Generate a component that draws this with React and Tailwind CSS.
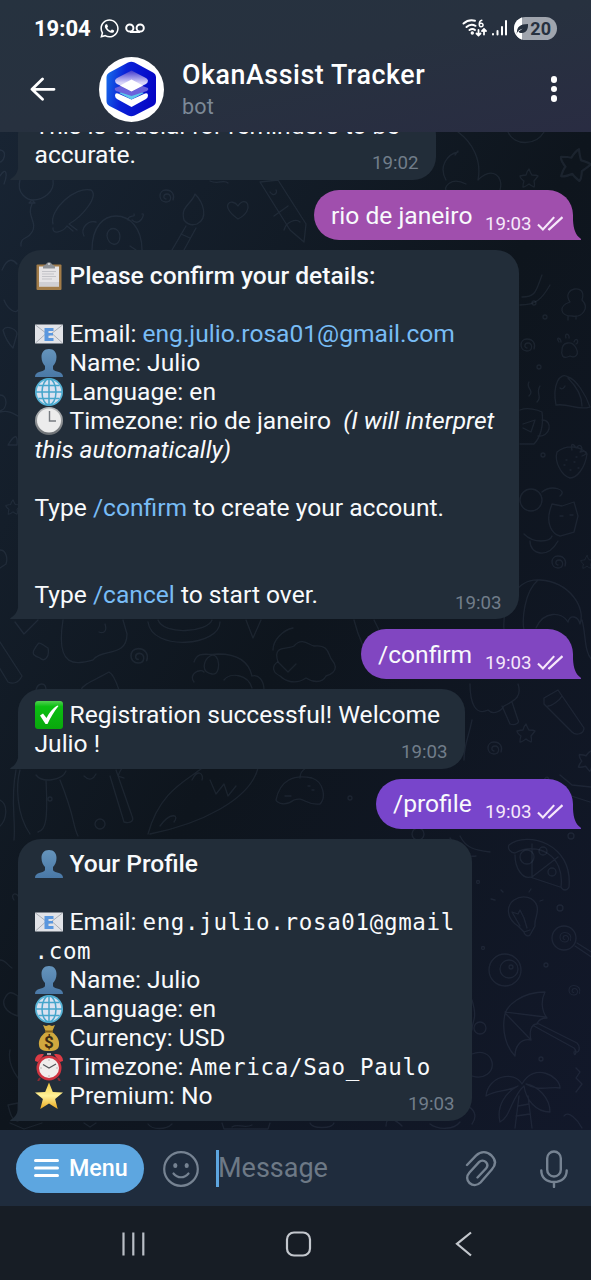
import React from "react";
import { FaWhatsapp } from "react-icons/fa";

function Spiral({ x, y, s = 1 }) {
  return (
    <path
      transform={`translate(${x} ${y}) scale(${s})`}
      d="M1 2c-3 0-3-5 1-5 5 0 5 8-1 8-8 0-8-12 0-12 6 0 9 5 7 10"
    />
  );
}

function Star({ x, y, s = 1, r = 0 }) {
  return (
    <path
      transform={`translate(${x} ${y}) rotate(${r}) scale(${s})`}
      d="M0-9Q2-4 3-3 8-3 9-2 6 2 5 3 6 8 5 9 1 7 0 6-4 9-6 9-6 5-5 3-9 0-9-2-5-3-3-3-2-7 0-9Z"
    />
  );
}

function Doodles() {
  return (
    <svg
      className="absolute left-0 top-0"
      width="591"
      height="998"
      viewBox="0 132 591 998"
      fill="none"
      stroke="#8fa3c0"
      strokeOpacity="0.1"
      strokeWidth="1.3"
      strokeLinecap="round"
      strokeLinejoin="round"
    >
      <Spiral x={165} y={197} />
      <Spiral x={526} y={346} />
      <Spiral x={557} y={563} />
      <Spiral x={137} y={657} s={1.2} />
      <Spiral x={493} y={749} />
      <Spiral x={573} y={991} s={0.8} />
      <Star x={529} y={178} />
      <Star x={526} y={733} />
      <Star x={575} y={164} s={1.7} r={15} />
      <Star x={13} y={507} s={0.8} />
      <Star x={587} y={562} s={0.7} />
      <Star x={588} y={760} s={1.1} r={20} />
      <path d="M20 180c-4 14 8 20 13 20 10 0 22-8 20-20M29 203l3-3 3 3zM32 204c-6 12 6 18 0 28-4 8-12 4-11 14M53 224c-4-14 22-38 38-34 8 6-8 26-22 34l8 6M73 231l-6-5c-4 6-15 9-14 2" />
      <path d="M92 250c0-24 12-34 24-34 14 0 26 12 26 34M84 236c-4-8 4-16 12-14M132 220c8 8 14-8 10-6M107 236c0-10 12-10 13 0 0 12-12 10-13 0M128 220c0-6 8-2 6-6M106 250l6 4M130 246l6 4" />
      <path d="M184 220c-4-14 8-16 11-26 8 8 14 24 2 30-6 2-10 0-13-4zM186 226l-14 24M196 228l-12 22M181 234l9 4" />
      <path d="M238 219c-20-14-6-22 0-13 8-12 18 4 0 13z" />
      <path d="M260 182l30 48 14 12 2-18-28-44zM270 192c4 6 8 0 6-2M274 216l14-10M284 230c2-8 12-12 16-8" />
      <path d="M210 181c8 4 14-2 18 2M446 180c-8-14 2-26 12-28M458 132c14 10 24 28 20 48 14-14 26-4 22 10M508 132c6 14 28 14 36 0M455 155l3-4M466 184c-16-8-22 4-20 6" />
      <path d="M0 150c8 0 4 14-2 12M0 176c6-10 8-2 4 8M2 270c6-14 12-10 15-6M4 300c4 10 12 14 14 10M3 330c4-6 14 0 14 4l-4 14c-4-4-8-10-10-18zM0 395c8 0 8 14 0 16M0 412c10-2 14 2 18 4M8 445c6-10 10-12 9 0zM0 550c6 0 8 8 6 14l-6 4" />
      <path d="M520 305c16 0 22-6 30-20M522 297c14 0 14-6 20-22M570 302c-10-14 18-20 12-2 8 8 0 18-10 16-12 0-14-10-2-14M568 316v4M576 316v3" />
      <circle cx="534" cy="303" r="2" />
      <circle cx="545" cy="317" r="2" />
      <circle cx="539" cy="367" r="2" />
      <circle cx="543" cy="455" r="2" />
      <path d="M562 350c0-8 10-10 14-2 4 8-2 10-6 8-8 4-9-2-8-6M559 342c-4-6 2-4 2 0M566 338c-2-6 4-4 3 0M574 342c2-6 6 0 2 2" />
      <path d="M556 405c-4-20 4-34 12-28 8 2 18 18 22 30-14 4-20-4-34-2zM568 378c8 8 14 18 14 28M560 388c2 2 4 0 5-2M529 396c6-6-4-8 0-14M537 402c6-6-2-8 3-16M520 410c8-3 18 0 22 2 2 14-2 26-8 32h-14M542 420c12 0 8 18-4 16M523 424l12-4-4 12-8-4" />
      <path d="M557 452c10-8 24-6 30 2-2 14-10 24-17 24-8-2-16-16-13-26zM572 450c-2-8 2-6 4-2 4-6 8 0 4 4 8-2 8 2 2 4M566 460h1M574 462h1M578 468h1M570 470h1M564 465h1M576 457h1" />
      <circle cx="531" cy="500" r="11" />
      <path d="M542 492c10-8 26-2 18 4M550 510l2-6 10 2 12-4 4 14-4 16-14 4c-8-2-14-12-10-26zM560 516h3M570 515h3M524 534c10 10 26 8 28 2M530 541c0 14 18 18 28 0" />
      <path d="M504 630c-2-24 12-52 36-50 30 2 46 28 40 44-2-8-10-10-12-2-6-10-24-12-32 6M538 580c-14 12-16 40-14 50M582 620c4 14 2 32 10 40" />
      <path d="M63 620c-8 50 14 44 30 40 8-12 34-2 34-26l-4-14M99 632c6 2 8-2 6-8M148 622c4 30 72 24 72 0M158 620c6 16 50 12 54 0M246 620l7 18 8-18M15 622l9 12 14-14M34 650c6-10 4-8 14-2 2 10-4 14-8 10-6-2-8-4-6-8z" />
      <path d="M0 642l22 34c-4 8-10 8-14 6l-12-20M194 662c4-12 14-6 24-8 14 0 30 4 34 22 6-2 12 4 12 14M210 656c10-6 12 20 2 18-12-2-8-14-2-18M194 682c-6-8 6-14 10-10M224 680c6-8 24-6 28 8M81 690c2-6 14-10 28-18 4 2 8 12 10 18M36 690c2-8 10-8 10 0M273 650c0-10 10-20 20-22M278 662l10 10 8-8" />
      <path d="M280 676c-12-6-4-14-2-14-6-18 10-12 16-16 8-10 16 0 20 0 16-2 14 10 18 14 10 12-6 16-6 16-4 8-14 6-20 2-12 8-22 2-26-2z" />
      <path d="M354 620c4 16 12 34 22 50M374 620l6 12M470 684c0 20 6 32 18 26 6 6 14 0 16-4 12-6 18-10 14-22M502 706l8 18c6 2 10-2 8-4l-6-18M544 698l14-8 26 38c0 6-8 8-12 4l-28-28zM548 706c4 0 12-6 14-10M472 720c-4 20-8 24-8 40M543 782c4-10 8-2 5 2-4 2-6 0-5-2M560 775l12 10 19 2M526 800l14-14 50 16" />
      <path d="M14 840c2-20-4-40 2-70M30 834c-14-20-14-50-10-64M36 775c6 8 26 6 30-4M46 780c2 40 0 50-8 52M60 780c16 40 12 44 18 56M84 776c6 6 10 2 12-2M110 776l14 46c8 2 10-2 8-6l-16-46M122 768c-6 10-4 8 2 10" />
      <path d="M148 834c12-44 40-54 54-66M150 834c50-10 100-34 108-66M192 780c6-12 12-6 10 0M210 780l6 14 8-10 4 12 8-10M160 826c10-14 20-12 14-4M276 800c4-20 18-26 36-22 12 4 14 20 8 26-14 2-16-8-26-4-8 6-16 4-18 0zM285 796h6M308 786h2M312 790h2M300 778c0-8 8-14 18-10" />
      <circle cx="50" cy="799" r="2" />
      <circle cx="350" cy="798" r="2" />
      <circle cx="100" cy="824" r="5" />
      <circle cx="418" cy="834" r="6" />
      <path d="M0 800c8 4 8 20-2 28M14 900c-4-6 2-8 4-4M0 960c6 0 8 6 12 8M4 1000c4-10 8-8 14-4v20c-8-2-16-8-14-16zM10 1050c-2 10 2 20 8 28M8 1105l10-2v18c-6 0-8-8-10-16zM450 838c8 10 14 20 26 18M460 836c6 12 14 14 30 16" />
      <path d="M509 845c18-14 64-2 60 42-2 4-6 4-8 0 4-32-24-46-46-34-4 0-8-4-6-8zM515 855c0 14 8 24 15 22l30 10M532 844v33l26-20" />
      <circle cx="527" cy="857" r="7" />
      <circle cx="543" cy="851" r="4" />
      <circle cx="552" cy="872" r="4" />
      <circle cx="571" cy="836" r="3" />
      <path d="M518 926c-12-8-12-20-4-26 9-6 20-3 23 6 2 9-3 12-2 20l-5 9c-2 2-6 0-6-3zM524 932l6-2M520 926l-8-14 6 2 2-4 4 8 3 10M491 899l4 1M501 890l2 2M531 889l-2 3M543 900l-3 1" />
      <circle cx="564" cy="938" r="12" />
      <Spiral x={564} y={938} s={0.8} />
      <path d="M575 946l18 12M577 943l16 10" />
      <circle cx="505" cy="970" r="16" />
      <circle cx="509" cy="969" r="9" />
      <circle cx="511" cy="967" r="2" />
      <circle cx="560" cy="908" r="3" />
      <circle cx="546" cy="965" r="2" />
      <circle cx="478" cy="882" r="1.5" />
      <circle cx="483" cy="948" r="1.5" />
      <circle cx="480" cy="1028" r="6" />
      <circle cx="541" cy="1059" r="2" />
      <path d="M545 992c-24 0-38 14-40 22-4 18 2 34 10 42 0-10 6-18 16-16-2-8 0-16 6-16 2-6 8-6 10-6-6-8-6-18-2-26zM505 1012l40 5M506 1014l25 26M534 1026l40 22c4 4 0 10 0 4M537 1023l40 20c4 4 2 12-2 8M472 1000c6 20 0 20 0 30M472 1076c12 4 22-4 20-14-2-8-10-12-20-8" />
      <path d="M522 1084c-8-14-34-8-36 12 10-6 20-4 32-10-12 6-22 20-18 36 10-4 12-26 24-36 2 14 12 26 26 26 0-14-12-26-24-28 12 8 26 2 34 4 0-12-26-26-38-4M519 1096l-4 32M528 1096l4 32M518 1106l11-2M516 1116l14-2M576 1068l4 4-4 6 6 6-6 8M564 1116c4-6 14 4 18 12M466 1106c8 2 12 10 6 18M386 1126c0-12 10-6 16 0M430 1124c8 6 24 6 30-2" />
      <path d="M10 1123l14 6 18-6M84 1123l6 4 6-4M148 1124c4 6 18 6 24 0M222 1123l2 6h44l2-6M232 1127c6-4 12 2 20-2M310 1123c2 6 22 6 24 0" />
    </svg>
  );
}

/* ---------- emoji drawings ---------- */

function Emoji({ children }) {
  return (
    <svg className="mr-[7px] inline-block h-7 w-7 align-[-6px]" viewBox="0 0 28 28">
      {children}
    </svg>
  );
}

function Clipboard() {
  return (
    <Emoji>
      <rect x="1.5" y="2.5" width="25" height="25.5" rx="1" fill="#a27c49" />
      <path d="M4 4.5h20v20H4z" fill="#e6e4e6" />
      <path d="M4 20h20v4.500H4z" fill="#d0cfd3" />
      <path d="M7 9.500h14M7 12h12M7 14.500h14M7 17h10" stroke="#c3c3c8" strokeWidth="1" />
      <path d="M8 6.500V4l3-1.500c1-3 5-3 6 0L20 4v2.500z" fill="#8d9196" />
      <circle cx="14" cy="2" r="1" fill="#d9dcdf" />
    </Emoji>
  );
}

function EmailIcon() {
  return (
    <Emoji>
      <rect x="0" y="4.500" width="28" height="19" rx="0.8" fill="#e1e3e8" />
      <path d="M.5 23l10-9M27.500 23l-10-9M.5 5L14 15.500 27.500 5" stroke="#a9adb5" strokeWidth="1" fill="none" />
      <path d="M9.500 8h9v3h-5v2h4.500v2.500h-4.500v2.500h5v3h-9z" fill="#5a97de" />
    </Emoji>
  );
}

function Person() {
  return (
    <Emoji>
      <defs>
        <linearGradient id="bust" x1="0" y1="0" x2="0" y2="1">
          <stop offset="0" stopColor="#6594bc" />
          <stop offset="1" stopColor="#4a78a6" />
        </linearGradient>
      </defs>
      <path
        d="M14 0c5 0 7.500 3.500 7.500 8 0 4-1.500 7-3.500 9v2.500c0 2 2.500 2.500 5 3.300 3.500 1.100 5 2.200 5 5.200H0c0-3 1.500-4.100 5-5.200 2.500-.8 5-1.300 5-3.300V17c-2-2-3.500-5-3.500-9C6.500 3.500 9 0 14 0z"
        fill="url(#bust)"
      />
    </Emoji>
  );
}

function Globe() {
  return (
    <Emoji>
      <circle cx="14" cy="14" r="14" fill="#55b3d6" />
      <circle cx="14" cy="14" r="12.300" fill="#d9e2f1" />
      <g fill="none" stroke="#45a5cb" strokeWidth="1.500">
        <path d="M14 1v26M1 14h26M3.500 7.500h21M3.500 20.500h21" />
        <ellipse cx="14" cy="14" rx="7" ry="13" />
      </g>
    </Emoji>
  );
}

function Clock() {
  return (
    <Emoji>
      <defs>
        <linearGradient id="rim" x1="0" y1="0" x2="0" y2="1">
          <stop offset="0" stopColor="#b9bbbd" />
          <stop offset="1" stopColor="#6b6f73" />
        </linearGradient>
      </defs>
      <circle cx="14" cy="14" r="14" fill="url(#rim)" />
      <circle cx="14" cy="13.600" r="12" fill="#ececec" />
      <path d="M14.500 4v10H21" stroke="#777b80" strokeWidth="1.400" fill="none" />
    </Emoji>
  );
}

function CheckBox() {
  return (
    <Emoji>
      <defs>
        <linearGradient id="green" x1="0" y1="0" x2="0" y2="1">
          <stop offset="0" stopColor="#52d052" />
          <stop offset=".2" stopColor="#0bbf12" />
          <stop offset="1" stopColor="#09a80c" />
        </linearGradient>
      </defs>
      <rect width="28" height="28" rx="3" fill="url(#green)" />
      <path d="M5 14.500l3-2 3.500 4.500C14 12 18 7 22.500 4.500l1 .5C19 10.500 15.500 16.500 12.500 23h-2z" fill="#fff" />
    </Emoji>
  );
}

function MoneyBag() {
  return (
    <Emoji>
      <path d="M8 1l3 1 3-1 3 1 3-1-3 7c6 4 7.500 9 7 13-.3 4-3 6-10 6s-9.700-2-10-6c-.5-4 1-9 7-13z" fill="#d0a83e" />
      <path d="M10 7.500h8" stroke="#86631c" strokeWidth="2" />
      <text x="14" y="24" textAnchor="middle" fontSize="17" fontWeight="700" fill="#3b2b14" fontFamily="Roboto, sans-serif">
        $
      </text>
    </Emoji>
  );
}

function Alarm() {
  return (
    <Emoji>
      <path d="M0 8C0 3 4 0 9 1.500L3 9zM28 8c0-5-4-8-9-6.500L25 9z" fill="#dd3b45" />
      <path d="M12 2h4v-2h-4z" fill="#a9a9ad" />
      <path d="M5 25l-2 3M23 25l2 3" stroke="#8c2b33" strokeWidth="2" />
      <circle cx="14" cy="15" r="12.500" fill="#cf3440" />
      <circle cx="14" cy="15" r="10" fill="#f0eeec" />
      <path d="M8 11.500l6 3.500 7-4" stroke="#55585c" strokeWidth="1.200" fill="none" />
      <path d="M14 6.500v1M14 22.500v1M5.500 15h1M21.500 15h1" stroke="#888" />
    </Emoji>
  );
}

function StarEmoji() {
  return (
    <Emoji>
      <defs>
        <linearGradient id="gold" x1="0" y1="0" x2="0" y2="1">
          <stop offset="0" stopColor="#f3c93a" />
          <stop offset=".5" stopColor="#fff29a" />
          <stop offset="1" stopColor="#e9a71c" />
        </linearGradient>
      </defs>
      <path d="M14 .5l3.800 9.500L28 10.600l-7.900 6.500 2.600 10-8.700-5.600-8.700 5.600 2.600-10L0 10.600 10.200 10z" fill="url(#gold)" />
    </Emoji>
  );
}

/* ---------- message parts ---------- */

function Time({ children }) {
  return <span className="relative top-[9px] text-[18.7px] text-[#717d8a]">{children}</span>;
}

function Incoming({ className, children }) {
  return (
    <div className={`relative ml-[17.5px] rounded-[23px] rounded-bl-none bg-[#222d39] pl-[17px] pr-[17px] ${className}`}>
      <svg className="absolute -left-[8px] bottom-0" width="9" height="18" viewBox="0 0 9 18">
        <path d="M9 0C8.500 9 6 14 .5 17c-.8.500-.5 1 .5 1H9z" fill="#222d39" />
      </svg>
      {children}
    </div>
  );
}

function Outgoing({ className, fill, children }) {
  return (
    <div className={`relative mr-[18px] flex h-[50px] justify-between self-end rounded-[25px] rounded-br-none pl-[17px] pr-[10px] pt-[10.500px] ${className}`}>
      <svg className={`absolute -right-[9px] bottom-0 ${fill}`} width="10" height="20" viewBox="0 0 10 20">
        <path d="M0 0h1c.5 9 2.500 15 7.500 18.500 1 .8.700 1.500-.5 1.500H0z" />
      </svg>
      <span className="text-[24.6px]">{children}</span>
      <span className="relative top-[9px] flex gap-[5px] text-[18.7px] text-[#f6e8fa]">
        19:03
        <svg className="mt-[6px]" width="26.500" height="15" viewBox="0 0 27 15" fill="none" stroke="#f6e8fa" strokeWidth="2.200">
          <path d="M1 8.500l5 5L17.500 1M11.500 12.800l1 .7L26 1" />
        </svg>
      </span>
    </div>
  );
}

function Line({ children }) {
  return <div className="h-[29px] whitespace-pre">{children}</div>;
}

function Link({ children }) {
  return <span className="text-[#78bcf5]">{children}</span>;
}

function Mono({ children }) {
  return <span className="font-['DejaVu_Sans_Mono',monospace] text-[22.500px] tracking-[0.660px]">{children}</span>;
}

function StatusBar() {
  return (
    <div className="flex h-14 items-center justify-between pl-[34px] pr-[34px]">
      <div className="flex items-center text-white">
        <span className="text-[22px] font-bold">19:04</span>
        <FaWhatsapp className="ml-[8px]" size={21} />
        <svg className="ml-[5px]" width="20" height="11" viewBox="0 0 20 11" fill="none" stroke="#fff" strokeWidth="2">
          <circle cx="4.800" cy="5" r="3.600" />
          <circle cx="15.200" cy="5" r="3.600" />
          <path d="M5 9h10" />
        </svg>
      </div>
      <div className="flex items-center">
        <svg width="46" height="22" viewBox="0 0 46 22" fill="none" stroke="#fff" strokeWidth="2" strokeLinecap="round">
          <path d="M1.500 6.500C5 3.500 9 2.800 13 3.800M4.500 10c2.500-2.300 6-2.800 9-1.200M7.500 13c2-1.300 4-1.200 5.500 0" />
          <circle cx="10.300" cy="16" r=".7" fill="#fff" />
          <path d="M19.800 3.300c-3 .5-3.500 6.500-.8 6.500 2.800 0 2.600-3.800 0-3.600-1.300.1-1.800 1-1.800 1.800" strokeWidth="1.500" />
          <path d="M16.500 13v5.500m-2-2l2 2 2-2M22 17.500V12m-2 2l2-2 2 2" strokeWidth="1.800" />
          <path d="M31 17v.5M35.500 14v3.500M40 10v7.500M44 4v13.500" strokeWidth="2" />
        </svg>
        <div className="relative ml-[6px] flex h-[23px] w-[43px] items-center justify-end overflow-hidden rounded-full bg-[#a0a5ae] pr-[6px]">
          <svg className="absolute left-0 top-0" width="16" height="23" viewBox="0 0 16 23">
            <path d="M0 0h8v23H0z" fill="#fff" />
            <path d="M3 15c0-5 3-8 11-8 .5 5-2 9-6 9-2 0-3-.5-3.500-1.500L9 11.500l-4 1.700L2 17z" fill="#27313f" />
          </svg>
          <span className="text-[18px] font-bold text-[#27313f]">20</span>
        </div>
      </div>
    </div>
  );
}

function Avatar() {
  return (
    <svg className="ml-[43px] shrink-0" width="65" height="65" viewBox="0 0 65 65">
      <defs>
        <linearGradient id="hex" x1="0" y1=".3" x2="1" y2=".5">
          <stop offset="0" stopColor="#1668e8" />
          <stop offset=".35" stopColor="#0a22d8" />
          <stop offset="1" stopColor="#0505c4" />
        </linearGradient>
        <linearGradient id="sheet" x1="0" y1="0" x2="0" y2="1">
          <stop offset="0" stopColor="#4038cc" />
          <stop offset=".6" stopColor="#d9d5fa" />
        </linearGradient>
      </defs>
      <circle cx="32.500" cy="32.500" r="32.500" fill="#fff" />
      <path d="M29 5.500q3.300-1.600 6.600 0L54 15.500q3 1.600 3 5v23.500q0 3.400-3 5l-18.400 9.500q-3.300 1.600-6.600 0L10.500 49q-3-1.600-3-5V20.500q0-3.400 3-5z" fill="url(#hex)" />
      <path d="M16 38.500q0-3 3-2l13.500 6 13.500-6q3-1 3 2 0 2-2 3.500L32.500 50 18 42q-2-1.500-2-3.500z" fill="#fff" />
      <path d="M20 36l12.500-6L45 36l-12.500 6.500z" fill="#5cc6ea" />
      <path d="M16 31l16.500-6L49 31q1 1.500-1 3L32.500 39 17 34q-2-1.500-1-3z" fill="#6a62dc" />
      <path d="M16 23.500q.5-2 3-3L32.500 13.500 46 20.500q2.500 1 3 3 0 2-2 3.500L32.500 34 18 27q-2-1.500-2-3.500z" fill="url(#sheet)" />
      <path d="M21 28.500l11.500-6 11.500 6-11.500 6z" fill="#fff" />
    </svg>
  );
}

function Header() {
  return (
    <header className="h-[132px] bg-gradient-to-br from-[#26323f] via-[#27313f] to-[#292c42]">
      <StatusBar />
      <div className="flex h-[66px] items-center pl-[30px] pr-[34px]">
        <svg width="26" height="24" viewBox="0 0 26 24" fill="none" stroke="#fff" strokeWidth="2.800" strokeLinecap="round" strokeLinejoin="round">
          <path d="M24 12.300H2M12.500 2L2 12.300l10.500 10" />
        </svg>
        <Avatar />
        <div className="ml-[18px] flex-1">
          <div className="pt-[2px] text-[26.800px] leading-8 font-medium tracking-[0.560px] text-white">OkanAssist Tracker</div>
          <div className="text-[21.500px] leading-[31px] tracking-[0.200px] text-[#7c8997]">bot</div>
        </div>
        <div className="flex flex-col gap-[3px]">
          <span className="size-[6.500px] rounded-full bg-white" />
          <span className="size-[6.500px] rounded-full bg-white" />
          <span className="size-[6.500px] rounded-full bg-white" />
        </div>
      </div>
    </header>
  );
}

function Composer() {
  return (
    <div className="flex h-[76px] items-center bg-[#1f2c3d] pl-4 pr-[23.500px]">
      <button className="flex h-[49px] w-32 items-center rounded-full bg-[#5da6e0] pl-[18px] text-[23.300px] font-medium text-white">
        <svg className="mr-[10px]" width="25" height="20" viewBox="0 0 25 20" stroke="#fff" strokeWidth="3" strokeLinecap="round">
          <path d="M1.500 2.500h22M1.500 10h22M1.500 17.500h22" />
        </svg>
        Menu
      </button>
      <svg className="relative top-[1px] ml-[19px]" width="36" height="36" viewBox="0 0 36 36" fill="none" stroke="#768392" strokeWidth="2.200" strokeLinecap="round">
        <circle cx="18" cy="18" r="16.800" />
        <path d="M10.500 22.500c4 5 11 5 15 0" />
        <ellipse cx="12.300" cy="14.500" rx="1" ry="1.500" fill="#768392" />
        <ellipse cx="23.700" cy="14.500" rx="1" ry="1.500" fill="#768392" />
      </svg>
      <span className="ml-[17px] h-[37px] w-[3px] bg-[#5da6e0]" />
      <span className="-ml-px flex-1 pt-[1px] text-[27px] text-[#6d7986]">Message</span>
      <svg className="relative top-[1px]" width="32" height="36" viewBox="0 0 32 36" fill="none" stroke="#768392" strokeWidth="2.400" strokeLinecap="round">
        <path d="M2 14L11 4.700c5-4.700 11-4.300 15.500-.2 4.500 4.500 4.500 9.500.3 14L15.500 31.500c-3.500 3.500-8 3.200-11 .5s-3.200-7 0-10.500L14 11.200c2-2 4.800-2 6.700-.3 2 1.900 2 4.600.3 6.600l-8.500 9" />
      </svg>
      <svg className="relative top-[1px] ml-[43px]" width="28" height="38" viewBox="0 0 28 38" fill="none" stroke="#768392" strokeWidth="2.400" strokeLinecap="round">
        <rect x="7.200" y="1.500" width="13.600" height="25" rx="6.800" />
        <path d="M1.300 20.500c0 7 5 11.500 12.700 11.500s12.700-4.500 12.700-11.500M14 32v5" />
      </svg>
    </div>
  );
}

function NavBar() {
  return (
    <nav className="flex h-[74px] items-center bg-[#171d25] pl-[121px] pt-[2px]">
      <svg width="24" height="24" viewBox="0 0 24 24" stroke="#b9bec5" strokeWidth="2.200">
        <path d="M2.500.500v23M12.300.500v23M22.300.500v23" />
      </svg>
      <svg className="ml-[140px]" width="27" height="26" viewBox="0 0 27 26" fill="none" stroke="#c3c7cd" strokeWidth="2.200">
        <rect x="2" y="1.500" width="23" height="23" rx="7" />
      </svg>
      <svg className="ml-[143px]" width="17" height="26" viewBox="0 0 17 26" fill="none" stroke="#c3c7cd" strokeWidth="2.200">
        <path d="M16 1.500L2 12.800 16 24.500" />
      </svg>
    </nav>
  );
}

export default function App() {
  return (
    <div className="flex h-[1280px] w-[591px] flex-col overflow-hidden font-['Roboto',sans-serif]">
      <Header />
      <main className="relative h-[998px] overflow-hidden bg-gradient-to-br from-[#182433] via-[#0e151d] to-[#12182a] text-[24.6px] leading-[29px] text-[#f8fafc]">
        <Doodles />
        <div className="-mt-5 flex flex-col gap-[10px]">
          <Incoming className="w-[418px] pb-[10px]">
            <div className="relative -top-px">
              <Line>This is crucial for reminders to be</Line>
              <div className="flex justify-between">
                <Line>accurate.</Line>
                <Time>19:02</Time>
              </div>
            </div>
          </Incoming>

          <Outgoing className="w-[259px] bg-[#a04fad]" fill="fill-[#a04fad]">rio de janeiro</Outgoing>

          <Incoming className="w-[501px] pb-[10px] pt-[11px]">
            <Line><Clipboard /><b className="font-medium">Please confirm your details:</b></Line>
            <Line />
            <Line><EmailIcon />Email: <Link>eng.julio.rosa01@gmail.com</Link></Line>
            <Line><Person />Name: Julio</Line>
            <Line><Globe />Language: en</Line>
            <Line><Clock />Timezone: rio de janeiro{"  "}<i>(I will interpret</i></Line>
            <Line><i>this automatically)</i></Line>
            <Line />
            <Line>Type <Link>/confirm</Link> to create your account.</Line>
            <Line />
            <Line />
            <div className="flex justify-between">
              <Line>Type <Link>/cancel</Link> to start over.</Line>
              <Time>19:03</Time>
            </div>
          </Incoming>

          <Outgoing className="w-[212px] bg-[#8146c1]" fill="fill-[#8146c1]">/confirm</Outgoing>

          <Incoming className="w-[447px] pb-[10.500px] pt-[11px]">
            <Line><CheckBox />Registration successful! Welcome</Line>
            <div className="flex justify-between">
              <Line>Julio !</Line>
              <Time>19:03</Time>
            </div>
          </Incoming>

          <Outgoing className="w-[197px] bg-[#7845cb]" fill="fill-[#7845cb]">/profile</Outgoing>

          <Incoming className="w-[454px] pb-[11.500px] pt-[10px]">
            <Line><Person /><b className="font-medium">Your Profile</b></Line>
            <Line />
            <Line><EmailIcon />Email: <Mono>eng.julio.rosa01@gmail</Mono></Line>
            <Line><Mono>.com</Mono></Line>
            <Line><Person />Name: Julio</Line>
            <Line><Globe />Language: en</Line>
            <Line><MoneyBag />Currency: USD</Line>
            <Line><Alarm />Timezone: <Mono>America/Sao_Paulo</Mono></Line>
            <div className="flex justify-between">
              <Line><StarEmoji />Premium: No</Line>
              <Time>19:03</Time>
            </div>
          </Incoming>
        </div>
      </main>
      <Composer />
      <NavBar />
    </div>
  );
}
